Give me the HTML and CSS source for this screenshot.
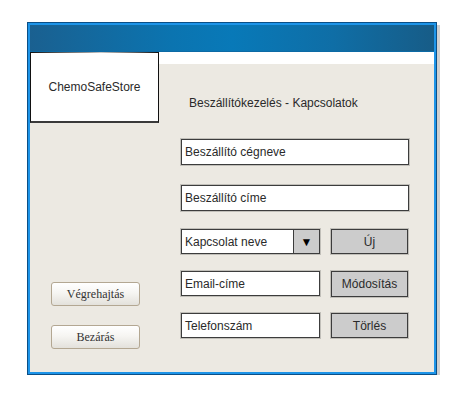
FILE: index.html
```html
<!DOCTYPE html>
<html lang="hu">
<head>
<meta charset="utf-8">
<title>ChemoSafeStore</title>
<link rel="stylesheet" href="styles.css">
</head>
<body>
<div class="window">
  <div class="frame">
    <div class="titlebar"></div>
    <div class="content">
      <div class="left">
        <div class="logo">ChemoSafeStore</div>
        <div class="actions">
          <button class="btn-win">Végrehajtás</button>
          <button class="btn-win">Bezárás</button>
        </div>
      </div>
      <div class="right">
        <div class="heading">Beszállítókezelés - Kapcsolatok</div>
        <div class="field wide r1">Beszállító cégneve</div>
        <div class="field wide r2">Beszállító címe</div>
        <div class="row r3">
          <div class="combo">
            <span class="combo-text">Kapcsolat neve</span>
            <span class="combo-arrow">▼</span>
          </div>
          <div class="sbtn">Új</div>
        </div>
        <div class="row r4">
          <div class="field narrow">Email-címe</div>
          <div class="sbtn">Módosítás</div>
        </div>
        <div class="row r5">
          <div class="field narrow">Telefonszám</div>
          <div class="sbtn">Törlés</div>
        </div>
      </div>
    </div>
  </div>
</div>
</body>
</html>
```

FILE: styles.css
```css
html, body {
  margin: 0;
  padding: 0;
  background: #ffffff;
}

.window {
  margin: 22px 0 0 27px;
  width: 410px;
  height: 353px;
  box-sizing: border-box;
  border: 1px solid #0b4f86;
  box-shadow: 3px 3px 0 #cfcfcf;
}

.frame {
  box-sizing: border-box;
  height: 100%;
  border: 2px solid #1d94e8;
  display: flex;
  flex-direction: column;
}

.titlebar {
  height: 27px;
  flex: none;
  background: linear-gradient(to right, #1a6090 0%, #0b74b0 35%, #0879b8 50%, #0f6ea6 75%, #175c87 100%);
  border-bottom: 1px solid #0c6aa5;
  box-sizing: border-box;
}

.content {
  flex: 1;
  display: flex;
  background: linear-gradient(#ffffff 0, #ffffff 12px, #ece9e2 12px);
  font-family: "Liberation Sans", Arial, sans-serif;
  font-size: 12px;
  color: #2a2a2a;
}

.left {
  width: 129px;
  flex: none;
  display: flex;
  flex-direction: column;
}

.logo {
  box-sizing: border-box;
  height: 71px;
  background: #fff linear-gradient(to right, #111 0%, #9a9a9a 45%, #c8c8c8 55%, #111 100%) top / 100% 1px no-repeat;
  border-left: 1px solid #111;
  border-right: 1px solid #111;
  border-bottom: 2px solid #3a3a3a;
  display: flex;
  align-items: center;
  justify-content: center;
  font-size: 12px;
  color: #2a2a2a;
}

.actions {
  margin: 159px 0 0 21px;
  display: flex;
  flex-direction: column;
  gap: 19px;
}

.btn-win {
  width: 89px;
  height: 24px;
  box-sizing: border-box;
  border: 1px solid #b3a792;
  border-radius: 3px;
  background: linear-gradient(#ffffff 0%, #f6f5f2 45%, #e3e1db 100%);
  font-family: "Liberation Serif", "Times New Roman", serif;
  font-size: 12px;
  font-weight: normal;
  color: #333;
  padding: 0;
}

.right {
  flex: 1;
  padding: 43px 0 0 22px;
  display: flex;
  flex-direction: column;
}

.heading {
  line-height: 16px;
  padding-left: 8px;
  margin-bottom: 28px;
}

.field, .combo, .sbtn {
  box-sizing: border-box;
  border: 1px solid #3c3c3c;
  box-shadow: 0 0 0 1px rgba(0, 0, 0, 0.18);
  display: flex;
  align-items: center;
}

.field {
  background: #fff;
  padding-left: 3px;
}

.wide {
  width: 228px;
  height: 26px;
}

.r2 { margin-top: 20px; }

.row {
  display: flex;
  gap: 11px;
  height: 25px;
}

.r3 { margin-top: 18px; }
.r4 { margin-top: 17px; }
.r5 { margin-top: 17px; }

.narrow {
  width: 139px;
  height: 25px;
}

.combo {
  width: 139px;
  height: 25px;
  background: #fff;
  align-items: stretch;
}

.combo-text {
  flex: 1;
  display: flex;
  align-items: center;
  padding-left: 3px;
}

.combo-arrow {
  width: 25px;
  flex: none;
  background: #cccccc;
  border-left: 1px solid #3c3c3c;
  display: flex;
  align-items: center;
  justify-content: center;
  font-size: 12px;
  color: #000;
}

.sbtn {
  width: 77px;
  height: 25px;
  background: #cccccc;
  justify-content: center;
}

.r4 .sbtn { height: 26px; }
```
